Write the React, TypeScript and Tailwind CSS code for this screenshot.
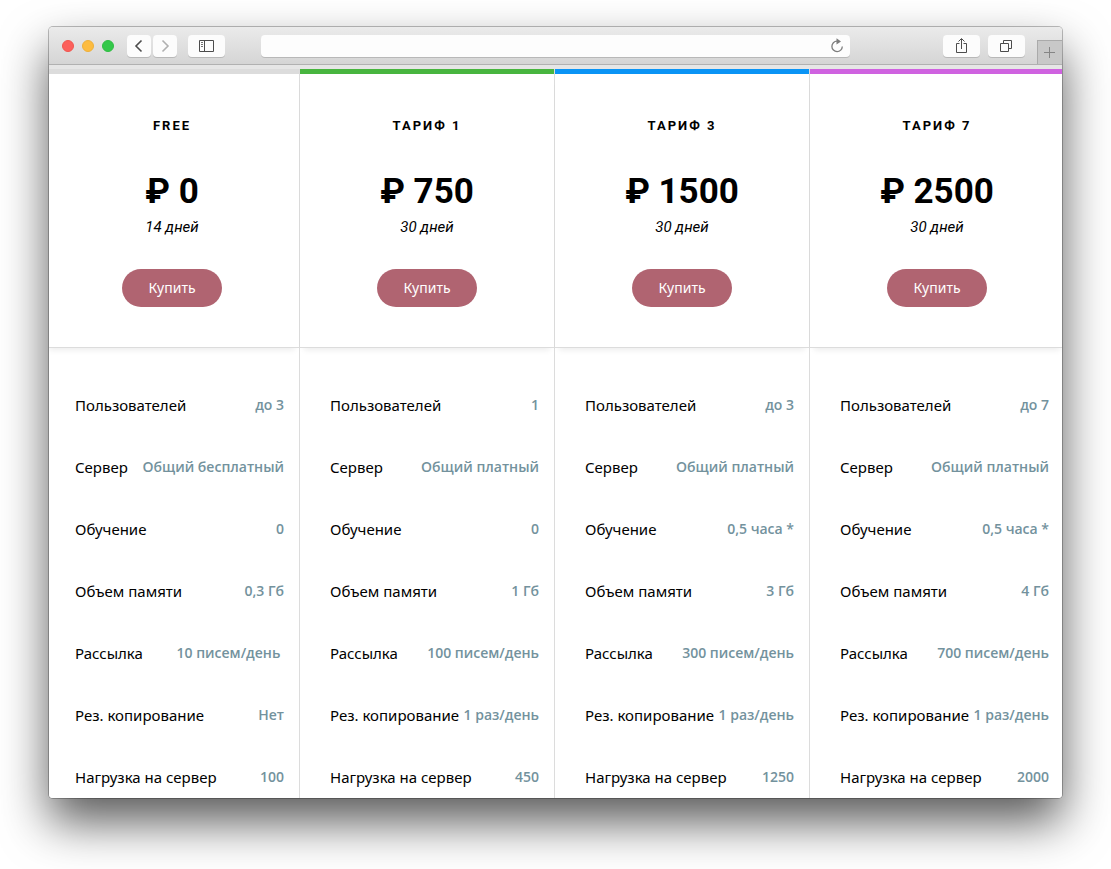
import { clsx } from "clsx";

type Plan = {
  name: string;
  price: string;
  period: string;
  accent: string;
  features: string[];
};

const FEATURE_LABELS = [
  "Пользователей",
  "Сервер",
  "Обучение",
  "Объем памяти",
  "Рассылка",
  "Рез. копирование",
  "Нагрузка на сервер",
];

const PLANS: Plan[] = [
  {
    name: "Free",
    price: "0",
    period: "14 дней",
    accent: "bg-[#dcdcdc]",
    features: ["до 3", "Общий бесплатный", "0", "0,3 Гб", "10 писем/день\u00a0", "Нет", "100"],
  },
  {
    name: "Тариф 1",
    price: "750",
    period: "30 дней",
    accent: "bg-[#48b53f]",
    features: ["1", "Общий платный", "0", "1 Гб", "100 писем/день", "1 раз/день", "450"],
  },
  {
    name: "Тариф 3",
    price: "1500",
    period: "30 дней",
    accent: "bg-[#0a94f5]",
    features: ["до 3", "Общий платный", "0,5 часа *", "3 Гб", "300 писем/день", "1 раз/день", "1250"],
  },
  {
    name: "Тариф 7",
    price: "2500",
    period: "30 дней",
    accent: "bg-[#cf62e0]",
    features: ["до 7", "Общий платный", "0,5 часа *", "4 Гб", "700 писем/день", "1 раз/день", "2000"],
  },
];

export default function App() {
  return (
    <div className="bg-white pt-[27px] pr-[49px] pb-[71px] pl-[49px]">
      <div className="overflow-hidden rounded-[4px] bg-white shadow-[0_0_0_1px_rgba(0,0,0,0.25),0_24px_48px_rgba(0,0,0,0.65)]">
        <BrowserBar />
        <main className="overflow-hidden bg-[#e6e6e6] pt-1">
          <div className="-mr-[3px] -ml-1 grid grid-cols-4">
            {PLANS.map((plan) => (
              <PlanColumn key={plan.name} plan={plan} />
            ))}
          </div>
        </main>
      </div>
    </div>
  );
}

function PlanColumn({ plan }: { plan: Plan }) {
  return (
    <section className="border-r border-[#dcdcdc] bg-white">
      <div className={clsx("h-[5px]", plan.accent)} />

      {/* Price header */}
      <div className="flex flex-col items-center border-b border-[#dcdcdc] pt-[41px] pb-10 shadow-[0_6px_6px_-4px_rgba(0,0,0,0.08)]">
        <h2 className="font-['Roboto',sans-serif] text-[13px] leading-[22px] font-bold tracking-[2px] text-black uppercase">
          {plan.name}
        </h2>
        <p className="mt-8 font-['Roboto',sans-serif] text-[35px] leading-[46px] font-bold text-black">
          ₽ {plan.price}
        </p>
        <p className="mt-0.5 font-['Roboto',sans-serif] text-[15px] leading-5 text-black italic">
          {plan.period}
        </p>
        <button
          type="button"
          className="mt-8 h-[38px] rounded-full bg-[#b06471] px-[26px] font-['Noto_Sans',sans-serif] text-[14px] leading-[22px] text-white"
        >
          Купить
        </button>
      </div>

      {/* Feature list */}
      <dl className="flex flex-col gap-10 pt-[46px] pr-[15px] pb-[10px] pl-[30px] leading-[22px] whitespace-nowrap">
        {FEATURE_LABELS.map((label, i) => (
          <div key={label} className="flex justify-between">
            <dt className="font-['Noto_Sans',sans-serif] text-[15px] text-black">{label}</dt>
            <dd className="font-['Open_Sans',sans-serif] text-[14px] font-semibold text-[#73929d]">
              {plan.features[i]}
            </dd>
          </div>
        ))}
      </dl>
    </section>
  );
}

const chromeButton =
  "flex h-[22px] items-center justify-center rounded-[4px] bg-[#fcfcfc] text-[#4c4c4c] shadow-[0_1px_0_rgba(0,0,0,0.15)]";

function BrowserBar() {
  return (
    <header className="flex h-[38px] items-center border-b border-[#b1b1b1] bg-linear-to-b from-[#ebebeb] to-[#d5d5d5] pl-[13px]">
      <div className="flex gap-2">
        <span className="size-3 rounded-full border border-[#f0564f] bg-[#fc605c]" />
        <span className="size-3 rounded-full border border-[#eeb03b] bg-[#fdbc40]" />
        <span className="size-3 rounded-full border border-[#30bd43] bg-[#34c84a]" />
      </div>

      <div className="ml-[13px] flex gap-0.5">
        <button type="button" aria-label="Назад" className={clsx(chromeButton, "w-6")}>
          <svg width="24" height="22" fill="none" stroke="currentColor" strokeWidth="1.6">
            <path d="M14.5 5.5 9 11l5.5 5.5" />
          </svg>
        </button>
        <button type="button" aria-label="Вперёд" className={clsx(chromeButton, "w-6")}>
          <svg width="24" height="22" fill="none" stroke="#b0b0b0" strokeWidth="1.6">
            <path d="M9.5 5.5 15 11l-5.5 5.5" />
          </svg>
        </button>
      </div>
      <button type="button" aria-label="Боковая панель" className={clsx(chromeButton, "ml-[11px] w-[37px]")}>
        <svg width="37" height="22" fill="none" stroke="currentColor">
          <path d="M11.5 5.5h14v11h-14zM16.5 5.5v11" />
          <path d="M13 7.5h2M13 9.5h2M13 11.5h2" strokeWidth="0.8" />
        </svg>
      </button>

      {/* Address field */}
      <div className="mr-[93px] ml-9 flex h-[22px] flex-1 items-center rounded-[4px] bg-[#fdfdfd] shadow-[0_1px_0_rgba(0,0,0,0.15)]">
        <input aria-label="Адрес" className="min-w-0 flex-1 bg-transparent px-2 text-[13px] outline-none" />
        <button type="button" aria-label="Обновить" className="mr-[5px] text-[#7d7d7d]">
          <svg width="16" height="18" fill="none" stroke="currentColor" strokeWidth="1.3">
            <path d="M8 4.2a5.2 5.2 0 1 0 5.3 5.3" />
            <path d="m7.5 1.2 4.5 3.2-4.5 3.2z" fill="currentColor" stroke="none" />
          </svg>
        </button>
      </div>

      <div className="flex gap-2">
        <button type="button" aria-label="Поделиться" className={clsx(chromeButton, "w-[37px]")}>
          <svg width="37" height="22" fill="none" stroke="currentColor">
            <path d="M16.5 8.5h-3v9h10v-9h-3M18.5 14V4M15.5 6.5l3-3 3 3" />
          </svg>
        </button>
        <button type="button" aria-label="Вкладки" className={clsx(chromeButton, "w-[37px]")}>
          <svg width="37" height="22" fill="none" stroke="currentColor">
            <path d="M12.5 8.5h8v8h-8zM15.5 8.5v-3h8v8h-3" />
          </svg>
        </button>
      </div>
      <button
        type="button"
        aria-label="Новая вкладка"
        className="ml-3 h-6 w-[25px] self-end border-t border-l border-[#aaaaaa] bg-[#c8c8c8] text-[#858585]"
      >
        <svg width="24" height="23" fill="none" stroke="currentColor">
          <path d="M6 11.5h11M11.5 6v11" />
        </svg>
      </button>
    </header>
  );
}
